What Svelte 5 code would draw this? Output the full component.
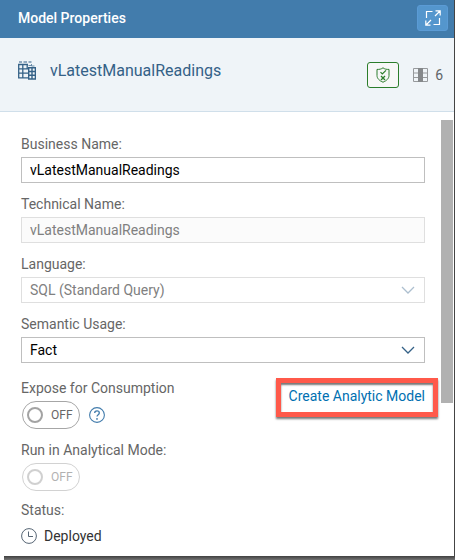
<script>
  let businessName = $state('vLatestManualReadings');
  let usage = $state('Fact');
  let exposed = $state(false);
</script>

{#snippet chevron()}
  <svg class="chevron" width="14" height="8" viewBox="0 0 14 8" aria-hidden="true">
    <path d="M1 1l6 6 6-6" fill="none" stroke="currentColor" stroke-width="1.3" />
  </svg>
{/snippet}

<div class="shell">
  <div class="panel">
    <header class="titlebar">
      <h1>Model Properties</h1>
      <button class="expand" aria-label="Expand panel">
        <svg width="16" height="16" viewBox="0 0 16 16" fill="none" stroke="currentColor" stroke-width="1.2" aria-hidden="true">
          <path d="M7.500 1.500h-6V8M14.500 8v6.500h-6M10.500 .8h4.700v4.700M15 1l-5 5M.8 10.500v4.700h4.700M1 15l5-5" />
        </svg>
      </button>
    </header>

    <section class="summary">
      <svg class="model" width="18" height="19" viewBox="0 0 18 19" fill="none" stroke="currentColor" aria-hidden="true">
        <path d="M1 1h3M5.500 1h3.500M10.500 1h3" stroke-width="1.200" />
        <path d="M10 3.500H.7v13.300H10M.7 7.800H10M.7 12.200H10M4.800 3.500v13.300M9.200 3.500v4.500" stroke-width="1.300" />
        <path d="M10.500 4.500h2.500M13.500 3v2h3" stroke-opacity=".7" />
        <path d="M10.700 6.700h6.700v11.300h-6.700zM10.700 10.500h6.700M10.700 14.200h6.700M14 6.700V18" stroke-width="1.400" />
      </svg>
      <h2>vLatestManualReadings</h2>
      <button class="validate" aria-label="Validation status">
        <svg width="14" height="16" viewBox="0 0 14 16" fill="none" stroke="currentColor" aria-hidden="true">
          <path d="M7 .8C5.300 2.200 3.300 2.500 1 2.400v6.100C1 11.500 3.500 13.800 7 15.200c3.500-1.400 6-3.700 6-6.700V2.400C10.700 2.500 8.700 2.200 7 .8z" />
          <path d="M4.500 5.200l1.800 1.800L10 3.400" stroke-width="1.200" />
          <path d="M5 9l4 4M9 9l-4 4" stroke-width="1.300" />
        </svg>
      </button>
      <span class="columns">
        <svg width="15" height="14" viewBox="0 0 15 14" aria-hidden="true">
          <path d="M.5 .5h14v13H.5zM.5 5h14M.5 9.500h14" fill="none" stroke="#96999c" />
          <path d="M5 0h5v14H5z" fill="#85888b" />
        </svg>
        6
      </span>
    </section>

    <div class="body">
      <form class="form">
        <div class="field">
          <label for="business">Business Name:</label>
          <input id="business" type="text" class="box" bind:value={businessName} />
        </div>
        <div class="field">
          <label for="technical">Technical Name:</label>
          <input id="technical" type="text" class="box" value="vLatestManualReadings" disabled />
        </div>
        <div class="field">
          <label for="language">Language:</label>
          <div class="select off">
            <select id="language" class="box" disabled><option>SQL (Standard Query)</option></select>
            {@render chevron()}
          </div>
        </div>
        <div class="field">
          <label for="usage">Semantic Usage:</label>
          <div class="select">
            <select id="usage" class="box" bind:value={usage}><option>Fact</option></select>
            {@render chevron()}
          </div>
        </div>

        <div class="expose">
          <div class="toggle">
            <label for="expose">Expose for Consumption</label>
            <div class="line">
              <label class="switch">
                <input id="expose" type="checkbox" role="switch" bind:checked={exposed} />
                <span>OFF</span>
              </label>
              <button type="button" class="help" aria-label="Help">
                <svg width="16" height="16" viewBox="0 0 16 16" fill="none" stroke="currentColor" aria-hidden="true">
                  <circle cx="8" cy="8" r="7.400" stroke-width="1.100" />
                  <path d="M5.700 6.100c0-1.400 1-2.200 2.300-2.200s2.300.8 2.300 2.100c0 1.700-2.300 1.800-2.300 3.600" stroke-width="1.300" />
                  <circle cx="8" cy="11.900" r=".9" fill="currentColor" stroke="none" />
                </svg>
              </button>
            </div>
          </div>
          <a href="#create">Create Analytic Model</a>
        </div>

        <div class="toggle">
          <label for="analytical">Run in Analytical Mode:</label>
          <label class="switch disabled">
            <input id="analytical" type="checkbox" role="switch" disabled />
            <span>OFF</span>
          </label>
        </div>

        <div class="status">
          <span>Status:</span>
          <div class="line deployed">
            <svg width="16" height="16" viewBox="0 0 16 16" fill="none" stroke="#566574" aria-hidden="true">
              <circle cx="8" cy="8" r="7.400" />
              <path d="M7.500 3.500v5H12" />
            </svg>
            Deployed
          </div>
        </div>
      </form>
      <div class="track"><div class="thumb"></div></div>
    </div>
  </div>
</div>

<style>
  .shell {
    box-sizing: border-box;
    min-height: 100vh;
    display: flex;
    flex-direction: column;
    background: #fff;
    color: #666;
    font: 14px/18px Roboto, sans-serif;
  }
  .shell::after {
    content: '';
    height: 4px;
    margin-left: 4px;
    background: linear-gradient(#404040, #737373);
  }
  .panel {
    flex: 1;
    display: flex;
    flex-direction: column;
    border-right: 1px solid #444;
  }
  h1, h2 { margin: 0; }
  button { padding: 0; cursor: pointer; }
  svg { display: block; flex: none; }

  .titlebar {
    display: flex;
    align-items: center;
    justify-content: space-between;
    height: 38px;
    padding: 0 6px 2px 18px;
    box-sizing: border-box;
    background: #427cac;
    color: #fff;
  }
  h1 { font-size: 14px; font-weight: 500; }
  .expand {
    display: grid;
    place-items: center;
    width: 31px;
    height: 26px;
    border: 1px solid #5b9bd5;
    border-radius: 3px;
    background: #5496cd;
    color: #fff;
  }

  .summary {
    display: flex;
    align-items: center;
    height: 74px;
    box-sizing: border-box;
    padding: 0 11px 0 18px;
    border-bottom: 1px solid #d0dfea;
    background: #eff4f8;
    color: #346187;
  }
  .model { margin-bottom: 8px; }
  h2 {
    flex: 1;
    margin: 0 0 8px 14px;
    font-size: 16px;
    font-weight: 400;
    line-height: 20px;
  }
  .validate {
    display: grid;
    place-items: center;
    width: 32px;
    height: 26px;
    border: 1px solid #2b7d2b;
    border-radius: 3px;
    background: #f7f7f7;
    color: #2b7d2b;
  }
  .columns {
    display: flex;
    align-items: center;
    gap: 7px;
    margin-left: 14px;
    color: #5f6468;
  }

  .body { flex: 1; display: flex; }
  .form {
    flex: 1;
    min-width: 0;
    padding: 23px 16px 8px 21px;
  }
  .field {
    display: flex;
    flex-direction: column;
    gap: 4px;
    margin-bottom: 12px;
  }
  .box {
    box-sizing: border-box;
    width: 100%;
    height: 26px;
    margin: 0;
    padding: 0 8px;
    border: 1px solid #bfbfbf;
    border-radius: 0;
    background: #fff;
    color: #000;
    font: inherit;
    appearance: none;
  }
  .box:disabled {
    border-color: #dfdfdf;
    background: #fbfbfb;
    color: #808080;
    opacity: 1;
  }
  .select { display: grid; align-items: center; color: #346187; }
  .select.off { color: #adbfcf; }
  .select .box:disabled { background: #fff; }
  .select > :global(*) { grid-area: 1 / 1; }
  .chevron { justify-self: end; margin-right: 10px; pointer-events: none; }

  .expose { display: flex; justify-content: space-between; }
  .toggle {
    display: flex;
    flex-direction: column;
    align-items: flex-start;
    gap: 4px;
    margin: 4px 0 8px;
  }
  .line { display: flex; align-items: center; gap: 9px; }
  .switch {
    display: flex;
    align-items: center;
    gap: 8px;
    box-sizing: border-box;
    width: 58px;
    height: 28px;
    margin-left: 1px;
    padding-left: 4px;
    border: 1px solid #a6a6a6;
    border-radius: 14px;
    font-size: 12px;
  }
  .switch input {
    box-sizing: border-box;
    width: 16px;
    height: 16px;
    margin: 0;
    border: 2px solid #a3a3a3;
    border-radius: 50%;
    appearance: none;
  }
  .switch.disabled { opacity: 0.5; }
  .help { border: 0; background: none; color: #427cac; }

  a {
    position: relative;
    align-self: flex-start;
    margin-top: 12px;
    color: #0070b1;
    text-decoration: none;
  }
  a::after {
    content: '';
    position: absolute;
    inset: -9px -13px -12px;
    border: 5px solid #ff594a;
    box-shadow: 0 2px 2px #777, inset 0 2px 2px #777;
  }
  .status { display: flex; flex-direction: column; gap: 8px; margin-top: 10px; }
  .deployed { gap: 7px; color: #333; }

  .track { width: 12px; padding: 8px 1px 0 0; }
  .thumb { height: 65%; background: #b1b1b1; }
</style>
